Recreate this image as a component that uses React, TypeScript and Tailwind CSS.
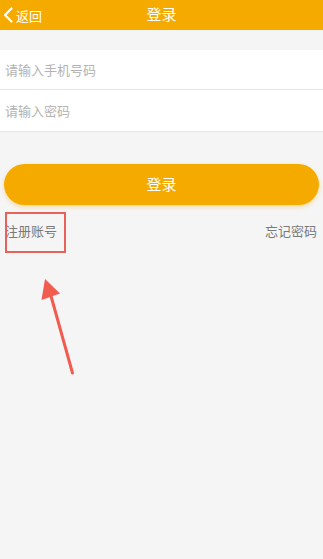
import React from "react";

export default function App() {
  const font = { fontFamily: '"Noto Sans CJK SC", "Noto Sans", sans-serif' };
  return (
    <div className="relative w-[323px] h-[559px] bg-[#f5f5f5] overflow-hidden" style={font}>
      <div className="flex items-center h-[30px] bg-[#f5aa00] text-white relative">
        <div className="flex items-center pl-[3px] gap-[3px]">
          <svg width="10" height="16" viewBox="0 0 10 16">
            <path d="M8.5 1.5 L2 8 L8.5 14.5" fill="none" stroke="white" strokeWidth="2.2" strokeLinecap="round" strokeLinejoin="round" />
          </svg>
          <span className="text-[13px] leading-none">返回</span>
        </div>
        <div className="absolute left-0 right-0 top-0 h-[30px] flex items-center justify-center text-[15px] pointer-events-none leading-none pb-[4px]">登录</div>
      </div>
      <div className="h-[20px]" />
      <div className="bg-white">
        <div className="h-[40px] flex items-center pl-[5px] border-b border-[#e6e6e6] text-[13px] text-[#b3b3b3]">请输入手机号码</div>
        <div className="h-[42px] flex items-center pl-[5px] border-b border-[#e6e6e6] text-[13px] text-[#b3b3b3]">请输入密码</div>
      </div>
      <div className="px-[4px] pt-[32px]">
        <div className="h-[41px] rounded-full bg-[#f5aa00] flex items-center justify-center text-white text-[15px] shadow-[0_2px_4px_rgba(245,170,0,0.35)]">登录</div>
      </div>
      <div className="flex justify-between items-center pl-[5px] pr-[6px] pt-[16px] text-[13px] text-[#7a7a7a]">
        <span>注册账号</span>
        <span>忘记密码</span>
      </div>
      <div className="absolute left-[5px] top-[212px] w-[61px] h-[41px] border-2 border-[#e8625c]" />
      <svg className="absolute left-0 top-0" width="323" height="559" viewBox="0 0 323 559">
        <line x1="72.5" y1="373" x2="51" y2="296" stroke="#f25b4f" strokeWidth="3" strokeLinecap="round" />
        <polygon points="45,279 41.5,300 60,293.5" fill="#f25b4f" />
      </svg>
    </div>
  );
}
